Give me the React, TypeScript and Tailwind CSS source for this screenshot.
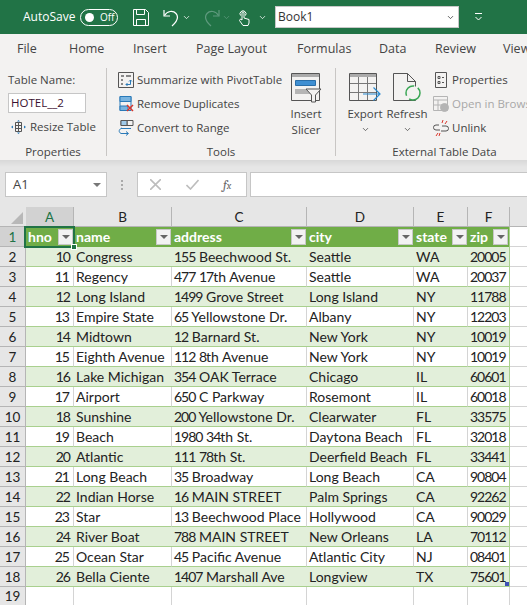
import React from "react";
import { ChevronDown } from "lucide-react";

const ui = { fontFamily: '"Open Sans", "Noto Sans", sans-serif' };
const cell = { fontFamily: 'Lato, "Open Sans", sans-serif' };

const hotels = [
  [10, "Congress", "155 Beechwood St.", "Seattle", "WA", "20005"],
  [11, "Regency", "477 17th Avenue", "Seattle", "WA", "20037"],
  [12, "Long Island", "1499 Grove Street", "Long Island", "NY", "11788"],
  [13, "Empire State", "65 Yellowstone Dr.", "Albany", "NY", "12203"],
  [14, "Midtown", "12 Barnard St.", "New York", "NY", "10019"],
  [15, "Eighth Avenue", "112 8th Avenue", "New York", "NY", "10019"],
  [16, "Lake Michigan", "354 OAK Terrace", "Chicago", "IL", "60601"],
  [17, "Airport", "650 C Parkway", "Rosemont", "IL", "60018"],
  [18, "Sunshine", "200 Yellowstone Dr.", "Clearwater", "FL", "33575"],
  [19, "Beach", "1980 34th St.", "Daytona Beach", "FL", "32018"],
  [20, "Atlantic", "111 78th St.", "Deerfield Beach", "FL", "33441"],
  [21, "Long Beach", "35 Broadway", "Long Beach", "CA", "90804"],
  [22, "Indian Horse", "16 MAIN STREET", "Palm Springs", "CA", "92262"],
  [23, "Star", "13 Beechwood Place", "Hollywood", "CA", "90029"],
  [24, "River Boat", "788 MAIN STREET", "New Orleans", "LA", "70112"],
  [25, "Ocean Star", "45 Pacific Avenue", "Atlantic City", "NJ", "08401"],
  [26, "Bella Ciente", "1407 Marshall Ave", "Longview", "TX", "75601"],
];

const columns = [
  { letter: "A", title: "hno", width: "w-[48px]" },
  { letter: "B", title: "name", width: "w-[98px]" },
  { letter: "C", title: "address", width: "w-[135px]" },
  { letter: "D", title: "city", width: "w-[107px]" },
  { letter: "E", title: "state", width: "w-[54px]" },
  { letter: "F", title: "zip", width: "w-[42px]" },
];

const tabs = [
  { label: "File", width: "w-[52px]" },
  { label: "Home", width: "w-[64px]" },
  { label: "Insert", width: "w-[63px]" },
  { label: "Page Layout", width: "w-[101px]" },
  { label: "Formulas", width: "w-[82px]" },
  { label: "Data", width: "w-[56px]" },
  { label: "Review", width: "w-[68px]" },
  { label: "View", width: "w-[30px]" },
];

// Lato's digits are wider than the sheet font's, so pull them together
function CellText({ value }: { value: string | number }) {
  return (
    <>
      {String(value)
        .split(/(\d+)/)
        .map((part, i) =>
          /\d/.test(part) ? (
            <span key={i} className="tracking-[-1px]">
              {part}
            </span>
          ) : (
            part
          ),
        )}
    </>
  );
}

function SmallAction({ icon, label, muted }: { icon: React.ReactNode; label: string; muted?: boolean }) {
  return (
    <div className={`flex h-[24px] items-center gap-[3px] whitespace-nowrap ${muted ? "text-[#a8a8a8]" : "text-[#444]"}`}>
      <span className="flex h-[18px] w-[16px] shrink-0 items-center justify-center">{icon}</span>
      {label}
    </div>
  );
}

function TitleBar() {
  return (
    <div className="flex h-[34px] items-center bg-[#217346] text-white">
      <span className="ml-[23px] w-[57px] text-[12px]">AutoSave</span>
      <div className="flex h-[17px] w-[38px] items-center rounded-full border border-white pl-[4px]">
        <span className="h-[9px] w-[9px] rounded-full bg-white" />
        <span className="ml-[6px] text-[10px]">Off</span>
      </div>
      <svg className="ml-[15px]" width="16" height="17" viewBox="0 0 16 17" fill="none" stroke="#fff">
        <path d="M.5.5h12l3 3v13H.5z" />
        <path d="M3.5.5v5h8v-5M3.5 16.5v-6h9v6" />
      </svg>
      <svg className="ml-[13px]" width="19" height="19" viewBox="0 0 19 19" fill="none" stroke="#fff" strokeWidth="1.2">
        <path d="M2 2v6h6" />
        <path d="M2.500 7.500C5 3 11 2 14 5.500c3 3.500 1 8-4 12.500" />
      </svg>
      <ChevronDown className="ml-[1px]" size={9} strokeWidth={2} />
      <svg className="ml-[11px]" width="19" height="19" viewBox="0 0 19 19" fill="none" stroke="#5f9a7e" strokeWidth="1.2">
        <path d="M17 2v6h-6" />
        <path d="M16.500 7.500C14 3 8 2 5 5.500c-3 3.500-1 8 4 12.500" />
      </svg>
      <ChevronDown className="ml-[1px] text-[#5f9a7e]" size={9} strokeWidth={2} />
      <svg className="ml-[6px]" width="15" height="18" viewBox="0 0 15 18" fill="none" stroke="#fff">
        <path d="M3.500 7.500a3 3 0 1 1 5 0" />
        <path d="M5 9V5a1 1 0 0 1 2 0v5l5 1.500V15l-1 2.500H6L2.500 12.500 3.500 11 5 12z" />
      </svg>
      <ChevronDown className="ml-[6px]" size={9} strokeWidth={2} />
      <div className="ml-[8px] flex h-[22px] w-[184px] items-center justify-between border border-[#c8c8c8] bg-white pl-[2px] pr-[2px] text-[12px] text-[#333]">
        Book1
        <ChevronDown className="mr-[1px]" size={9} strokeWidth={2} />
      </div>
      <svg className="ml-[15px]" width="9" height="8" viewBox="0 0 9 8" fill="none" stroke="#fff">
        <path d="M1 .5h7M1.500 4 4.500 7l3-3" />
      </svg>
    </div>
  );
}

function Ribbon() {
  return (
    <div className="bg-[#f3f2f1]" style={ui}>
      <div className="flex h-[30px] items-center pl-[17px]">
        {tabs.map((tab) => (
          <span key={tab.label} className={`${tab.width} shrink-0 whitespace-nowrap text-[12.5px] text-[#444]`}>
            {tab.label}
          </span>
        ))}
      </div>
      <div className="flex h-[96px] overflow-hidden text-[11.5px] text-[#444]">
        <div className="flex w-[106px] shrink-0 flex-col pl-[8px]">
          <div className="mt-[4px] h-[25px] leading-[24px] whitespace-nowrap">Table Name:</div>
          <div className="h-[20px] w-[78px] border border-[#c6c6c6] bg-white pl-[2px] leading-[18px] text-[#3a1030]">HOTEL__2</div>
          <div className="mt-[2px] flex h-[24px] items-center">
            <svg className="ml-[3px] mr-[4px]" width="15" height="14" viewBox="0 0 15 14" fill="none">
              <path d="M4.500 2.500h6v9h-6zM4.500 5.500h6M4.500 8.500h6M7.500 2.500v9" stroke="#555" />
              <path d="M0 7l2-1.500v3zM15 7l-2-1.500v3zM7.500 0l-1.500 1.500h3zM7.500 14l-1.500-1.500h3z" fill="#2a7ab8" />
            </svg>
            Resize Table
          </div>
          <div className="mt-auto h-[16px] pr-[8px] text-center leading-[16px]">Properties</div>
        </div>
        <div className="my-[4px] w-px shrink-0 bg-[#c8c6c4]" />
        <div className="flex w-[228px] shrink-0 flex-col">
          <div className="flex flex-1">
            <div className="ml-[11px] mt-[4px] flex w-[168px] flex-col">
              <SmallAction
                label="Summarize with PivotTable"
                icon={
                  <svg width="16" height="16" viewBox="0 0 16 16" fill="none">
                    <path d="M.5.5h15v15H.5z" stroke="#555" />
                    <path d="M3 3h3v2H3zM8 3h5v2H8zM3 7h2v2H3zM3 11h2v2H3z" fill="#888" />
                    <path d="M8 12.500h4.500V8M11 9.500l1.500-1.500L14 9.500M9.500 11 8 12.500 9.500 14" stroke="#2a7ab8" />
                  </svg>
                }
              />
              <SmallAction
                label="Remove Duplicates"
                icon={
                  <svg width="16" height="16" viewBox="0 0 16 16" fill="none">
                    <path d="M2 .5h11v14H2z" stroke="#2a7ab8" />
                    <path d="M2 .5h11v5H2zM2 10h8v4.500H2z" fill="#79b4e0" stroke="#2a7ab8" />
                    <path d="M9 9l6 6M15 9l-6 6" stroke="#d9352b" strokeWidth="1.500" />
                  </svg>
                }
              />
              <SmallAction
                label="Convert to Range"
                icon={
                  <svg width="16" height="16" viewBox="0 0 16 16" fill="none">
                    <path d="M3 .5h12v5H3zM9 .5v5" stroke="#555" />
                    <path d="M3 .5h6v5H3z" fill="#9fc9e8" stroke="#555" />
                    <path d="M3 8.500H13M4 8C1 9 0 12 3 13.500h7M8 11.500l2.500 2-2.500 2" stroke="#2a7ab8" />
                  </svg>
                }
              />
            </div>
            <div className="mt-[8px] flex w-[40px] flex-col items-center leading-[16px]">
              <svg width="31" height="31" viewBox="0 0 31 31" fill="none">
                <path d="M.5 1.500h28v27H.5z" stroke="#555" />
                <path d="M1 2h27v3H1z" fill="#aaa" />
                <path d="M4.500 8.500h20v5h-20z" fill="#3f8fd2" stroke="#2a6ea8" />
                <path d="M4 17h18v5H4z" fill="#b5b5b5" />
                <path d="M15 17h15l-5.500 6v7h-4v-7z" fill="#f3f2f1" stroke="#555" />
              </svg>
              <span className="mt-[3px]">Insert</span>
              <span>Slicer</span>
            </div>
          </div>
          <div className="h-[16px] text-center leading-[16px]">Tools</div>
        </div>
        <div className="my-[4px] w-px shrink-0 bg-[#c8c6c4]" />
        <div className="flex w-[217px] shrink-0 flex-col">
          <div className="flex flex-1">
            <div className="ml-[8px] mt-[8px] flex w-[42px] flex-col items-center leading-[16px]">
              <svg width="32" height="31" viewBox="0 0 32 31" fill="none">
                <path d="M.5 1.500h27v27H.5z" stroke="#555" />
                <path d="M1 2h26v3H1z" fill="#aaa" />
                <path d="M1 11.500h26M1 20.500h26M9.500 5v23M18.500 5v23" stroke="#777" />
                <path d="M14 22h16M24.500 15.500 31 22l-6.500 6.500" stroke="#2a8ad0" strokeWidth="1.200" />
              </svg>
              <span className="mt-[3px]">Export</span>
              <ChevronDown className="mt-[3px]" size={9} strokeWidth={2} />
            </div>
            <div className="mt-[8px] flex w-[42px] flex-col items-center leading-[16px]">
              <svg width="30" height="31" viewBox="0 0 30 31" fill="none">
                <path d="M1.500 1.500h14l8 8v19h-22z" stroke="#555" />
                <path d="M15.500 1.500v8h8" stroke="#555" />
                <circle cx="21" cy="21" r="7" fill="#f3f2f1" stroke="#3aa655" strokeWidth="1.500" strokeDasharray="15 4" />
              </svg>
              <span className="mt-[3px]">Refresh</span>
              <ChevronDown className="mt-[3px]" size={9} strokeWidth={2} />
            </div>
            <div className="ml-[5px] mt-[4px] flex flex-col">
              <SmallAction
                label="Properties"
                icon={
                  <svg width="12" height="16" viewBox="0 0 12 16" fill="none" stroke="#555">
                    <path d="M.5.500h11v15H.5zM3 4.500h2v2H3zM3 9.500h2v2H3zM7 5.500h2M7 10.500h2" />
                  </svg>
                }
              />
              <SmallAction
                muted
                label="Open in Browser"
                icon={
                  <svg width="16" height="16" viewBox="0 0 16 16" fill="none" stroke="#b4b4b4">
                    <path d="M.5.500h14v14H.5zM.5 4h14M.5 9h8M5 4v11" />
                    <circle cx="11.500" cy="11.500" r="4" fill="#b4b4b4" />
                  </svg>
                }
              />
              <SmallAction
                label="Unlink"
                icon={
                  <svg width="16" height="16" viewBox="0 0 16 16" fill="none">
                    <path d="M6 5H3a2.500 2.500 0 0 0 0 5h4M9 6h4a2.500 2.500 0 0 1 0 5H8" stroke="#555" />
                    <path d="M10 0 9 3M14 1l-2 3M3 16l2-3M6 16l1-3" stroke="#d9352b" />
                  </svg>
                }
              />
            </div>
          </div>
          <div className="h-[16px] text-center leading-[16px]">External Table Data</div>
        </div>
      </div>
    </div>
  );
}

function FormulaBar() {
  return (
    <div className="flex h-[47px] items-start bg-[linear-gradient(#d8d8d8,#e6e6e6_7px)] pt-[12px] pl-[5px]" style={ui}>
      <div className="flex h-[25px] w-[102px] items-center justify-between border border-[#c6c6c6] bg-white pl-[7px] pr-[5px] text-[13px] text-[#444]">
        A1
        <span className="h-0 w-0 border-x-[4px] border-t-[4px] border-x-transparent border-t-[#777]" />
      </div>
      <div className="ml-[14px] flex h-[25px] w-[4px] flex-col justify-center gap-[2px]">
        <span className="h-[2px] w-[2px] bg-[#aaa]" />
        <span className="h-[2px] w-[2px] bg-[#aaa]" />
        <span className="h-[2px] w-[2px] bg-[#aaa]" />
      </div>
      <div className="ml-[12px] flex h-[25px] w-[110px] items-center border border-[#c6c6c6] bg-white">
        <svg className="ml-[12px]" width="11" height="11" viewBox="0 0 11 11" stroke="#bdbdbd" strokeWidth="1.600">
          <path d="M0 0l11 11M11 0 0 11" />
        </svg>
        <svg className="ml-[25px]" width="13" height="11" viewBox="0 0 13 11" fill="none" stroke="#bdbdbd" strokeWidth="1.600">
          <path d="M.5 6l4 4 8-9" />
        </svg>
        <span className="ml-[24px] font-serif text-[13px] italic text-[#666]">
          f<span className="text-[10px]">x</span>
        </span>
      </div>
      <div className="ml-[3px] h-[25px] flex-1 border border-r-0 border-[#c6c6c6] bg-white" />
    </div>
  );
}

function FilterButton() {
  return (
    <span className="ml-auto mr-[1px] flex h-[16px] w-[15px] shrink-0 items-center justify-center border border-[#c8c8c8] bg-[#f2f2f2]">
      <span className="h-0 w-0 border-x-[4px] border-t-[4px] border-x-transparent border-t-[#666]" />
    </span>
  );
}

function Sheet() {
  return (
    <div className="relative bg-white text-[14px] text-[#222]" style={cell}>
      {/* column letters */}
      <div className="flex h-[20px] bg-[#e6e6e6] text-[13.5px] leading-[21px]">
        <div className="flex w-[26px] items-end justify-end border-b border-[#b5b5b5] pb-[2px] pr-[3px]">
          <span className="h-0 w-0 border-b-[12px] border-l-[12px] border-b-[#b8b8b8] border-l-transparent" />
        </div>
        {columns.map((col, i) => (
          <div
            key={col.letter}
            className={`${col.width} border-r border-b border-[#b5b5b5] text-center ${i === 0 ? "bg-[#d2d2d2] text-[#217346]" : ""}`}
          >
            {col.letter}
          </div>
        ))}
        <div className="flex-1 border-b border-[#b5b5b5]" />
      </div>

      {/* table header row */}
      <div className="flex h-[20px] leading-[20px]">
        <div className="w-[26px] border-r border-b border-[#b5b5b5] bg-[#d2d2d2] text-center text-[13.5px] text-[#217346]">1</div>
        {columns.map((col, c) => (
          <div
            key={col.title}
            className={`${col.width} flex items-center bg-[#70ad47] pl-[2px] font-bold text-white ${c === 5 ? "border-r border-r-[#a9d08e]" : ""}`}
          >
            {col.title}
            <FilterButton />
          </div>
        ))}
        <div className="flex-1 border-b border-[#d4d4d4]" />
      </div>

      {/* data rows */}
      {hotels.map((row, r) => (
        <div key={r} className="flex h-[20px] leading-[20px]">
          <div className="w-[26px] border-r border-b border-[#b5b5b5] bg-[#e6e6e6] text-center text-[13.5px]">{r + 2}</div>
          {row.map((value, c) => (
            <div
              key={c}
              className={`${columns[c].width} overflow-hidden whitespace-nowrap border-b border-[#a9d08e] ${c === 0 ? "pr-[4px] text-right" : "pl-[2px]"} ${r % 2 === 0 ? "bg-[#e2efda]" : c < 5 ? "border-r border-r-[#d4d4d4]" : ""} ${c === 5 ? "border-r border-r-[#a9d08e]" : ""}`}
            >
              <CellText value={value} />
            </div>
          ))}
          <div className="flex-1 border-b border-[#d4d4d4]" />
        </div>
      ))}

      {/* empty row 19 */}
      <div className="flex h-[18px] leading-[18px]">
        <div className="w-[26px] border-r border-[#b5b5b5] bg-[#e6e6e6] text-center text-[13.5px]">19</div>
        {columns.map((col) => (
          <div key={col.letter} className={`${col.width} border-r border-[#d4d4d4]`} />
        ))}
      </div>

      {/* selection on A1 */}
      <div className="pointer-events-none absolute left-[24px] top-[19px] h-[22px] w-[51px] border-2 border-[#217346]" />
      <div className="absolute left-[71px] top-[37px] h-[6px] w-[6px] border border-white bg-[#217346]" />
      {/* table resize handle */}
      <div className="absolute left-[505px] top-[375px] h-[4px] w-[4px] bg-[#3f51b5]" />
    </div>
  );
}

export default function App() {
  return (
    <div className="h-[605px] w-[527px] overflow-hidden bg-white" style={ui}>
      <TitleBar />
      <Ribbon />
      <FormulaBar />
      <Sheet />
    </div>
  );
}
